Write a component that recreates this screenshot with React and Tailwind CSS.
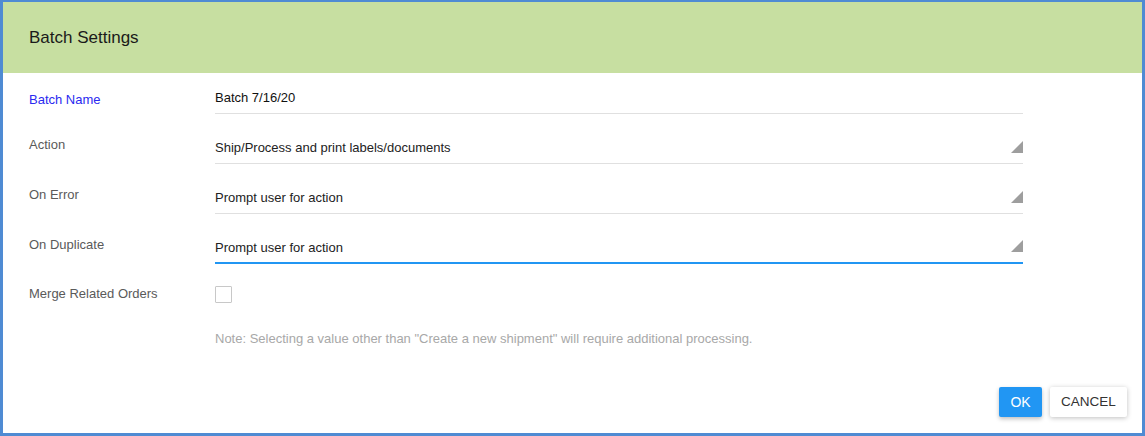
export default function App() {
  const rows = [
    { label: "Action", value: "Ship/Process and print labels/documents" },
    { label: "On Error", value: "Prompt user for action" },
    { label: "On Duplicate", value: "Prompt user for action", focused: true },
  ]

  return (
    <div className="w-[1145px] h-[436px] bg-white border-[3px] border-t-2 border-[#4f8bd3] flex flex-col font-['Liberation_Sans',Arial,sans-serif]">
      {/* Header */}
      <div className="h-[71px] bg-[#c7dfa1] flex items-center pl-[26px]">
        <h2 className="text-[17px] text-[#1a1a1a] pt-[1px]">Batch Settings</h2>
      </div>

      {/* Form */}
      <div className="flex flex-col pl-[26px]">
        <div className="h-[41px] flex items-end">
          <div className="w-[186px] pb-[4px] text-[13px] leading-[20px] text-[#2a2af0]">Batch Name</div>
          <div className="w-[808px] border-b border-[#e0e0e0] pb-[5px] text-[13px] leading-[20px] text-[#111]">
            Batch 7/16/20
          </div>
        </div>

        {rows.map((row) => (
          <div key={row.label} className="h-[50px] flex items-end">
            <div className="w-[186px] pb-[9px] text-[13px] leading-[20px] text-[#5a5a5a]">{row.label}</div>
            <div
              className={`relative w-[808px] text-[13px] leading-[20px] text-[#222] ${
                row.focused ? "border-b-2 border-[#2196f3] pb-[4px]" : "border-b border-[#e0e0e0] pb-[5px]"
              }`}
            >
              {row.value}
              <svg className="absolute right-0 bottom-[10px]" width="12" height="12" viewBox="0 0 12 12">
                <polygon points="12,0 12,12 0,12" fill="#9e9e9e" />
              </svg>
            </div>
          </div>
        ))}

        <div className="h-[60px] flex items-center">
          <div className="w-[186px] text-[13px] leading-[20px] text-[#5a5a5a]">Merge Related Orders</div>
          <div className="w-[17px] h-[17px] border border-[#c8c8c8] bg-white rounded-[1px]" />
        </div>

        <div className="h-[30px] flex items-center pl-[186px] text-[13px] text-[#a8a8a8]">
          Note: Selecting a value other than "Create a new shipment" will require additional processing.
        </div>
      </div>

      {/* Footer */}
      <div className="flex-1 flex items-end justify-end gap-[8px] pr-[15px] pb-[16px]">
        <button className="h-[30px] w-[43px] rounded-[2px] bg-[#2196f3] text-white text-[14px] shadow-[0_2px_4px_rgba(0,0,0,0.25)]">
          OK
        </button>
        <button className="h-[30px] w-[77px] rounded-[2px] bg-white text-[#333] text-[13.5px] shadow-[0_1px_5px_rgba(0,0,0,0.25)]">
          CANCEL
        </button>
      </div>
    </div>
  )
}
